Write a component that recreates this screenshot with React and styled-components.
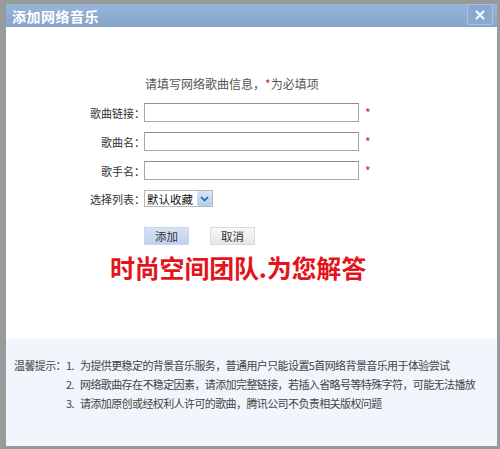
import styled, { createGlobalStyle } from 'styled-components';

const GlobalStyle = createGlobalStyle`
  body {
    margin: 0;
    font-family: "Noto Sans CJK SC", "Noto Sans", sans-serif;
  }
`;

const Screen = styled.div`
  width: 500px;
  height: 449px;
  box-sizing: border-box;
  padding: 4px 3px 3px 6px;
  display: flex;
  background: #979b9a;
`;

const Dialog = styled.div`
  flex: 1;
  display: flex;
  flex-direction: column;
  background: #fff;
`;

const TitleBar = styled.div`
  height: 23px;
  display: flex;
  align-items: center;
  justify-content: space-between;
  padding: 0 4px 0 6px;
  background: linear-gradient(#98b5da, #86a4cb);
`;

const Title = styled.div`
  color: #fff;
  font-size: 14px;
  font-weight: bold;
  letter-spacing: 0.5px;
`;

const CloseButton = styled.div`
  width: 26px;
  height: 21px;
  margin-top: -2px;
  box-sizing: border-box;
  border: 1px solid #a9c1df;
  background: #8ba9cf;
  display: flex;
  align-items: center;
  justify-content: center;
`;

const Body = styled.div`
  flex: 1;
  padding-top: 50px;
`;

const Heading = styled.div`
  padding-left: 139px;
  font-size: 12px;
  line-height: 14px;
  color: #555;
  margin-bottom: 12px;
`;

const Star = styled.span`
  color: #c8282c;
  font-size: 12px;
`;

const Form = styled.div`
  display: grid;
  grid-template-columns: 135px 215px auto;
  column-gap: 3px;
  row-gap: 10px;
  align-items: center;
`;

const Label = styled.div`
  text-align: right;
  font-size: 11px;
  color: #333;
  margin-right: -4px;
`;

const Input = styled.div`
  height: 19px;
  box-sizing: border-box;
  border: 1px solid #a7a7a7;
  border-top-color: #8d8d8d;
  background: #fff;
`;

const RowStar = styled(Star)`
  padding-left: 3px;
  align-self: start;
  margin-top: 1px;
`;

const Select = styled.div`
  width: 69px;
  height: 17px;
  box-sizing: border-box;
  border: 1px solid #b7b7b7;
  display: flex;
  align-items: center;
  justify-content: space-between;
  font-size: 11.5px;
  color: #111;
  padding-left: 2px;
`;

const SelectArrow = styled.div`
  width: 15px;
  height: 15px;
  border-radius: 2px;
  background: linear-gradient(#d8e6f8, #b3cbeb);
  display: flex;
  align-items: center;
  justify-content: center;
`;

const Buttons = styled.div`
  display: flex;
  gap: 21px;
  padding-left: 138px;
  margin-top: 20px;
`;

const Button = styled.div`
  width: 45px;
  height: 18px;
  display: flex;
  align-items: center;
  justify-content: center;
  font-size: 11.5px;
  color: #333;
  box-sizing: border-box;
  border: 1px solid ${(p) => (p.primary ? '#c5d6ee' : '#dadada')};
  background: ${(p) => (p.primary ? 'linear-gradient(#d5e2f4, #bfd2ec)' : 'linear-gradient(#f8f8f8, #e6e6e6)')};
`;

const Slogan = styled.div`
  padding-left: 104px;
  margin-top: 7px;
  font-size: 25px;
  line-height: 30px;
  font-weight: bold;
  letter-spacing: -0.2px;
  color: #e3141c;
`;

const Footer = styled.div`
  height: 107px;
  box-sizing: border-box;
  background: #f1f5fc;
  padding: 17px 0 0 8px;
  display: flex;
  font-size: 11px;
  letter-spacing: -0.6px;
  line-height: 19px;
  color: #444;
  white-space: nowrap;
`;

const TipLabel = styled.div`
  width: 52px;
`;

const TipList = styled.div`
  display: flex;
  flex-direction: column;
`;

const Tip = styled.div`
  display: flex;
`;

const TipNum = styled.span`
  width: 14px;
`;

const fields = ['歌曲链接：', '歌曲名：', '歌手名：'];

const tips = [
  '为提供更稳定的背景音乐服务，普通用户只能设置5首网络背景音乐用于体验尝试',
  '网络歌曲存在不稳定因素，请添加完整链接，若插入省略号等特殊字符，可能无法播放',
  '请添加原创或经权利人许可的歌曲，腾讯公司不负责相关版权问题',
];

export default function App() {
  return (
    <>
      <GlobalStyle />
      <Screen>
        <Dialog>
          <TitleBar>
            <Title>添加网络音乐</Title>
            <CloseButton>
              <svg width="12" height="10" viewBox="0 0 12 10">
                <path d="M2 1 L10 9 M10 1 L2 9" stroke="#fff" strokeWidth="1.8" />
              </svg>
            </CloseButton>
          </TitleBar>
          <Body>
            <Heading>
              请填写网络歌曲信息，<Star>*</Star>为必填项
            </Heading>
            <Form>
              {fields.map((f) => (
                <>
                  <Label key={f}>{f}</Label>
                  <Input />
                  <RowStar>*</RowStar>
                </>
              ))}
              <Label>选择列表：</Label>
              <Select>
                默认收藏
                <SelectArrow>
                  <svg width="9" height="6" viewBox="0 0 9 6">
                    <path d="M1 1 L4.5 4.5 L8 1" stroke="#2a5aa8" strokeWidth="1.6" fill="none" />
                  </svg>
                </SelectArrow>
              </Select>
              <span />
            </Form>
            <Buttons>
              <Button primary>添加</Button>
              <Button>取消</Button>
            </Buttons>
            <Slogan>时尚空间团队.为您解答</Slogan>
          </Body>
          <Footer>
            <TipLabel>温馨提示：</TipLabel>
            <TipList>
              {tips.map((t, i) => (
                <Tip key={i}>
                  <TipNum>{i + 1}.</TipNum>
                  {t}
                </Tip>
              ))}
            </TipList>
          </Footer>
        </Dialog>
      </Screen>
    </>
  );
}
